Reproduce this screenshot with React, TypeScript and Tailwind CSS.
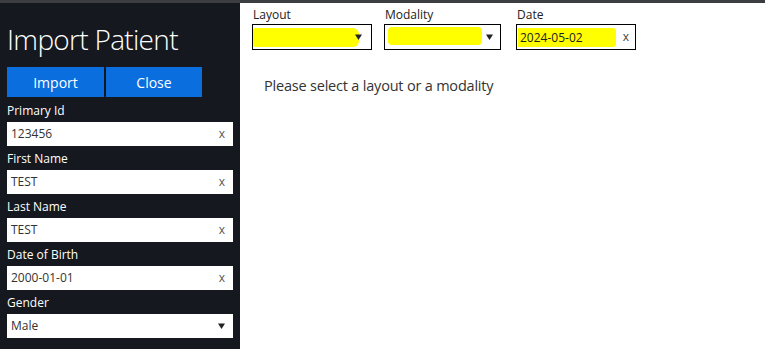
const font = { fontFamily: '"Open Sans", "Noto Sans", sans-serif' };

const fields = [
  { label: 'Primary Id', value: '123456' },
  { label: 'First Name', value: 'TEST' },
  { label: 'Last Name', value: 'TEST' },
  { label: 'Date of Birth', value: '2000-01-01' },
];

const Caret = () => (
  <svg width="7" height="6" viewBox="0 0 7 6" className="shrink-0">
    <path d="M0 0.5h7L3.5 6z" fill="#222" />
  </svg>
);

const App = () => {
  return (
    <div
      className="flex h-[349px] w-[765px] overflow-hidden border-t-[3px] border-[#3b3d40] bg-white"
      style={font}
    >
      {/* side panel */}
      <div className="flex w-[240px] shrink-0 flex-col bg-[#15181e] px-[7px]">
        <div className="pt-[16px] text-[28px] font-light leading-[40px] tracking-[-0.7px] text-white">
          Import Patient
        </div>
        <div className="mt-[8px] flex gap-[2px]">
          <button className="h-[30px] w-[97px] bg-[#0a6edf] text-[14px] text-white">Import</button>
          <button className="h-[30px] w-[96px] bg-[#0a6edf] text-[14px] text-white">Close</button>
        </div>
        <div className="mt-px flex flex-col">
          {fields.map((f) => (
            <div key={f.label}>
              <div className="h-[24px] pt-px text-[12px] leading-[24px] text-white">{f.label}</div>
              <div className="flex h-[24px] w-[226px] items-center justify-between bg-white pl-[4px] pr-[8px] text-[12px] text-[#333]">
                <span>{f.value}</span>
                <span className="text-[#555]">x</span>
              </div>
            </div>
          ))}
          <div className="h-[24px] pt-px text-[12px] leading-[24px] text-white">Gender</div>
          <div className="flex h-[24px] w-[226px] items-center justify-between bg-white pl-[4px] pr-[8px] text-[12px] text-[#333]">
            <span>Male</span>
            <Caret />
          </div>
        </div>
      </div>

      {/* main */}
      <div className="flex flex-1 flex-col pl-[12px] pt-[3px]">
        <div className="flex">
          <div className="w-[120px]">
            <div className="h-[18px] pl-px text-[12px] leading-[18px] text-[#222]">Layout</div>
            <div className="flex h-[26px] items-center border border-black pr-[8px]">
              <span className="h-[19px] w-[106px] rounded-r-[6px] rounded-l-[2px] bg-[#ffff00]" />
              <span className="-ml-[4px] flex">
                <Caret />
              </span>
            </div>
          </div>
          <div className="ml-[12px] w-[117px]">
            <div className="h-[18px] pl-px text-[12px] leading-[18px] text-[#222]">Modality</div>
            <div className="flex h-[26px] items-center justify-between border border-black pl-[3px] pr-[7px]">
              <span className="mb-[3px] h-[18px] w-[94px] rounded-[4px] bg-[#ffff00]" />
              <Caret />
            </div>
          </div>
          <div className="ml-[15px] w-[120px]">
            <div className="h-[18px] pl-px text-[12px] leading-[18px] text-[#222]">Date</div>
            <div className="flex h-[26px] items-center justify-between border border-black pl-px pr-[6px]">
              <span className="h-[19px] w-[98px] rounded-r-[3px] bg-[#ffff00] pl-[2px] text-[12px] leading-[19px] text-[#222]">
                2024-05-02
              </span>
              <span className="text-[12px] text-[#444]">x</span>
            </div>
          </div>
        </div>
        <div className="mt-[26px] pl-[12px] text-[14.5px] leading-[20px] tracking-[-0.2px] text-[#333]">
          Please select a layout or a modality
        </div>
      </div>
    </div>
  );
};

export default App;
